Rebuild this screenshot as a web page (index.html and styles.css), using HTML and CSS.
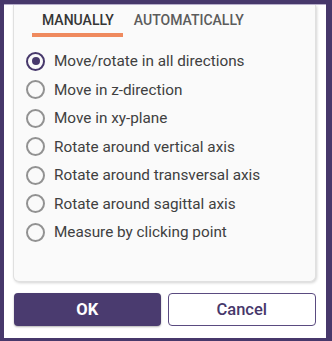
FILE: index.html
```html
<!DOCTYPE html>
<html>
<head>
<meta charset="utf-8">
<link rel="stylesheet" href="styles.css">
</head>
<body>
<div class="panel">
  <div class="card">
    <div class="tabs">
      <div class="tab active">MANUALLY</div>
      <div class="tab">AUTOMATICALLY</div>
    </div>
    <div class="options">
      <label class="opt"><span class="radio checked"></span><span>Move/rotate in all directions</span></label>
      <label class="opt"><span class="radio"></span><span>Move in z-direction</span></label>
      <label class="opt"><span class="radio"></span><span>Move in xy-plane</span></label>
      <label class="opt"><span class="radio"></span><span>Rotate around vertical axis</span></label>
      <label class="opt"><span class="radio"></span><span>Rotate around transversal axis</span></label>
      <label class="opt"><span class="radio"></span><span>Rotate around sagittal axis</span></label>
      <label class="opt"><span class="radio"></span><span>Measure by clicking point</span></label>
    </div>
  </div>
  <div class="actions">
    <button class="btn primary">OK</button>
    <button class="btn secondary">Cancel</button>
  </div>
</div>
</body>
</html>
```
FILE: styles.css
```css
html, body {
  margin: 0;
  padding: 0;
  height: 341px;
  overflow: hidden;
}
body {
  background: #47386b;
  font-family: Roboto, "Liberation Sans", sans-serif;
  padding: 4px 6px 3px 4px;
  box-sizing: border-box;
}
.panel {
  background: #ffffff;
  height: 334px;
  box-sizing: border-box;
  border-top: 1px solid #b6aeca;
  padding: 0 10px 0 9px;
  display: flex;
  flex-direction: column;
  overflow: hidden;
}
.card {
  background: #fafafa;
  border: 1px solid #e0e0e0;
  border-top: none;
  border-radius: 0 0 6px 6px;
  box-shadow: 1px 1px 3px rgba(0,0,0,0.18);
  height: 277px;
  box-sizing: border-box;
  padding: 0 0 0 12px;
}
.tabs {
  display: flex;
  padding-left: 6px;
  height: 32px;
}
.tab {
  font-size: 14px;
  font-weight: 500;
  color: #5c5c5c;
  padding: 0 9px 0 10px;
  display: flex;
  align-items: center;
  padding-top: 1px;
  box-sizing: border-box;
  border-bottom: 4px solid transparent;
}
.tab.active {
  color: #363636;
  border-bottom-color: #ef8a5e;
}
.tab + .tab {
  padding-left: 11px;
}
.options {
  display: flex;
  flex-direction: column;
  padding-top: 10px;
}
.opt {
  display: flex;
  align-items: center;
  height: 28.5px;
  font-size: 15.3px;
  color: #404040;
  gap: 9px;
}
.radio {
  width: 19px;
  height: 19px;
  box-sizing: border-box;
  border: 2px solid #929292;
  border-radius: 50%;
  flex: none;
  position: relative;
}
.radio.checked {
  border-color: #47386b;
}
.radio.checked::after {
  content: "";
  position: absolute;
  left: 3.5px;
  top: 3.5px;
  width: 8px;
  height: 8px;
  border-radius: 50%;
  background: #47386b;
}
.actions {
  display: flex;
  gap: 7px;
  margin-top: 11px;
  padding-left: 1px;
}
.btn {
  flex: 1;
  height: 33px;
  border-radius: 4px;
  font-family: Roboto, "Liberation Sans", sans-serif;
  font-size: 16.5px;
  box-sizing: border-box;
}
.primary {
  background: #4a3b6f;
  color: #ffffff;
  font-weight: 700;
  border: none;
  box-shadow: 0 1px 2px rgba(0,0,0,0.3);
}
.secondary {
  background: #ffffff;
  color: #47386b;
  font-weight: 500;
  border: 1.5px solid #5a4b80;
}
```
